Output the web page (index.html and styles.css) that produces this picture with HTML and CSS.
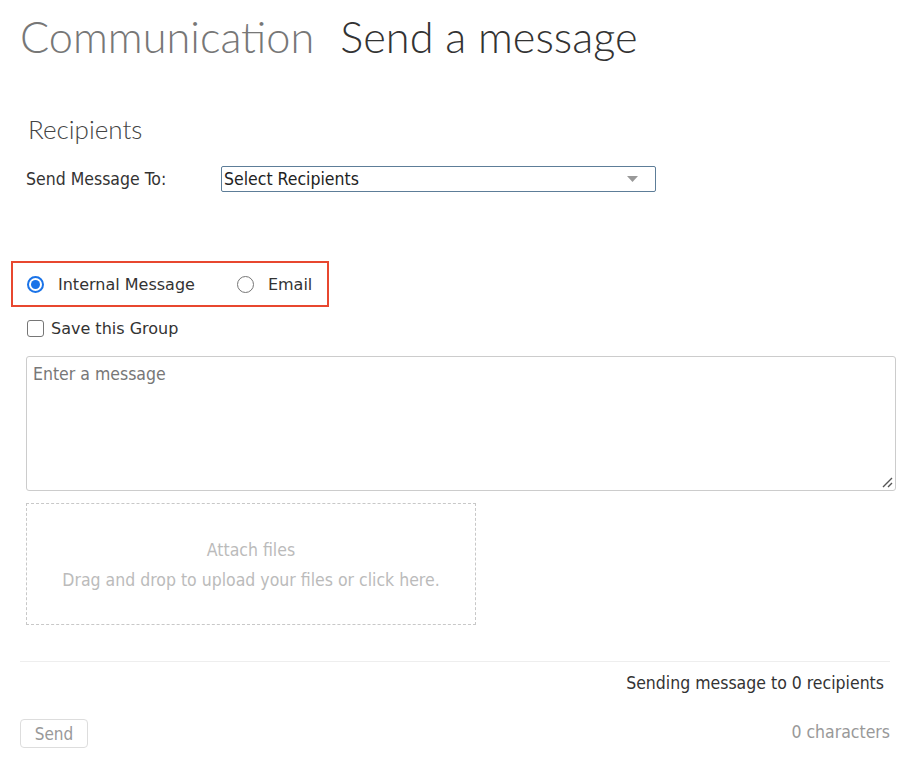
FILE: index.html
```html
<!DOCTYPE html>
<html>
<head>
<meta charset="utf-8">
<link rel="stylesheet" href="styles.css">
</head>
<body>
<div class="page">
  <h1 class="title"><span class="crumb">Communication</span><span class="current">Send a message</span></h1>

  <h2 class="section">Recipients</h2>
  <div class="row-to">
    <label class="to-label">Send Message To:</label>
    <div class="select">
      <span>Select Recipients</span>
      <svg class="caret" width="11" height="6" viewBox="0 0 11 6"><path d="M0 0h11L5.5 6z" fill="#999"/></svg>
    </div>
  </div>

  <div class="type-box">
    <label class="radio"><span class="dot on"></span>Internal Message</label>
    <label class="radio"><span class="dot"></span>Email</label>
  </div>

  <label class="check"><span class="box"></span>Save this Group</label>

  <div class="textarea">
    <span class="placeholder">Enter a message</span>
    <svg class="grip" width="12" height="12" viewBox="0 0 12 12"><path d="M11 2L2 11M11 7L7 11" stroke="#555" stroke-width="1.4"/></svg>
  </div>

  <div class="dropzone">
    <div>Attach files</div>
    <div>Drag and drop to upload your files or click here.</div>
  </div>

  <div class="rule"></div>
  <div class="sending">Sending message to 0 recipients</div>
  <div class="footer">
    <button class="send">Send</button>
    <span class="count">0 characters</span>
  </div>
</div>
</body>
</html>
```
FILE: styles.css
```css
* { box-sizing: border-box; }
html, body { margin: 0; padding: 0; background: #fff; }
body { font-family: "DejaVu Sans Condensed", "DejaVu Sans", sans-serif; font-size: 17.5px; color: #333; }
.page { padding: 0 16px 0 20px; }
.title { margin: 0; padding-top: 10px; font-family: Lato, sans-serif; font-weight: 300; font-size: 43.3px; line-height: 52px; display: flex; gap: 26px; white-space: nowrap; }
.crumb { color: #777; }
.current { color: #333; }
.section { margin: 52px 0 0 8px; font-family: Lato, sans-serif; font-weight: 300; font-size: 26px; line-height: 30px; color: #444; }
.row-to { display: flex; align-items: center; margin-top: 22px; padding-left: 6px; }
.to-label { width: 195px; }
.select { width: 435px; height: 26px; border: 1px solid #5d7d98; border-radius: 2px; display: flex; align-items: center; justify-content: space-between; padding: 0 17px 0 2px; color: #222; }
.caret { display: block; }
.type-box { margin: 69px 0 0 -9px; width: 318px; height: 46px; border: 2px solid #e8472f; display: flex; align-items: center; padding-left: 14px; white-space: nowrap; }
.radio { display: flex; align-items: center; font-family: "DejaVu Sans", sans-serif; font-size: 16px; color: #333; margin-right: 42px; white-space: nowrap; }
.dot { flex: none; width: 17px; height: 17px; border-radius: 50%; border: 1px solid #767676; margin-right: 14px; position: relative; }
.dot.on { border: 2px solid #1a73e8; }
.dot.on::after { content: ""; position: absolute; left: 2px; top: 2px; width: 9px; height: 9px; border-radius: 50%; background: #1a73e8; }
.check { display: flex; align-items: center; margin: 12px 0 0 7px; font-family: "DejaVu Sans", sans-serif; font-size: 16px; color: #333; }
.box { width: 17px; height: 17px; border: 1px solid #767676; border-radius: 3px; margin-right: 7px; }
.textarea { position: relative; margin: 18px 0 0 6px; width: 870px; height: 135px; border: 1px solid #ccc; border-radius: 3px; padding: 7px 6px; }
.placeholder { color: #777; }
.grip { position: absolute; right: 2px; bottom: 2px; }
.dropzone { margin: 12px 0 0 6px; width: 450px; height: 122px; border: 1px dashed #c8c8c8; display: flex; flex-direction: column; align-items: center; justify-content: center; gap: 8px; color: #bbb; line-height: 22px; padding-top: 2px; }
.rule { margin-top: 36px; height: 1px; background: #eee; width: 870px; }
.sending { margin-top: 11px; text-align: right; padding-right: 6px; color: #333; }
.footer { display: flex; justify-content: space-between; align-items: center; margin-top: 23px; }
.send { width: 68px; height: 29px; border: 1px solid #ddd; border-radius: 4px; background: #fff; color: #999; font-family: "DejaVu Sans Condensed", sans-serif; font-size: 17px; padding: 0; margin-top: 3px; }
.count { color: #999; }
```
